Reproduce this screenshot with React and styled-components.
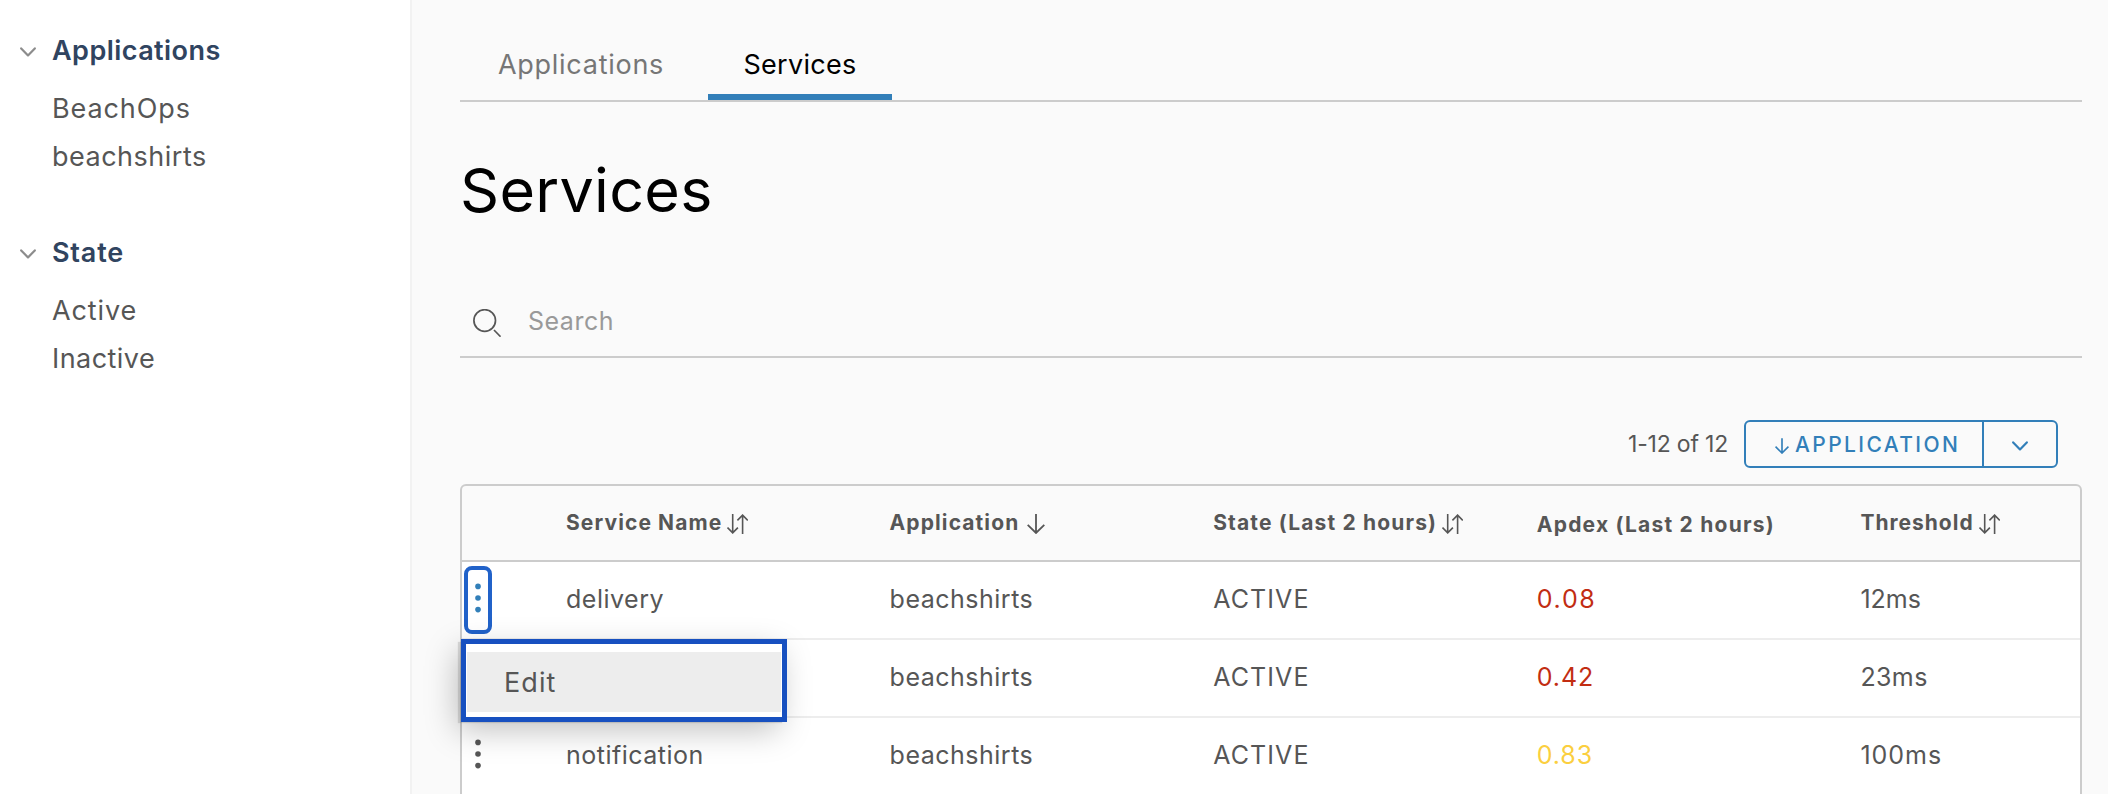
import React from "react";
import styled, { createGlobalStyle, css } from "styled-components";

const GlobalStyle = createGlobalStyle`
  *, *::before, *::after { box-sizing: border-box; }
  body {
    margin: 0;
    background: #fafafa;
    color: #565656;
    font-family: Inter, "Liberation Sans", sans-serif;
    font-size: 25px;
    overflow: hidden;
  }
  button { font: inherit; color: inherit; background: none; border: 0; padding: 0; margin: 0; }
`;

const Page = styled.div`
  display: flex;
  height: 794px;
  overflow: hidden;
`;

const Sidebar = styled.aside`
  flex: 0 0 412px;
  display: flex;
  flex-direction: column;
  gap: 47px;
  padding: 26px 20px 0;
  background: #fff;
  border-right: 2px solid #f2f2f2;
`;

const Heading = styled.h2`
  display: flex;
  align-items: center;
  gap: 16px;
  height: 48px;
  margin: 0 0 11px;
  font-size: 27px;
  font-weight: 600;
  color: #304460;
  letter-spacing: ${(p) => p.$spacing || 0}px;
  svg { margin-top: 4px; }
`;

const FilterList = styled.ul`
  list-style: none;
  margin: 0;
  padding: 0 0 0 32px;
`;

const FilterItem = styled.li`
  font-size: 27px;
  line-height: 48px;
  letter-spacing: ${(p) => p.$spacing || 0}px;
`;

const Main = styled.main`
  flex: 1;
  min-width: 0;
  padding: 0 26px 0 48px;
`;

const Tabs = styled.nav`
  display: flex;
  gap: 7px;
  height: 102px;
  padding: 28px 0 0 1px;
  border-bottom: 2px solid #ccc;
`;

const Tab = styled.button`
  width: ${(p) => p.$width}px;
  height: 72px;
  padding-top: 1px;
  font-size: 27px;
  line-height: 71px;
  letter-spacing: ${(p) => p.$spacing || 0}px;
  color: ${(p) => (p.$active ? "#000" : "#767676")};
  ${(p) => p.$active && css`box-shadow: inset 0 -6px 0 #327fb9;`}
`;

const Title = styled.h1`
  margin: 48px 0 56px;
  font-size: 61px;
  line-height: 80px;
  font-weight: 400;
  letter-spacing: 0.3px;
  color: #000;
`;

const SearchBar = styled.div`
  display: flex;
  align-items: center;
  gap: 27px;
  height: 72px;
  padding-left: 13px;
  border-bottom: 2px solid #ccc;
  color: #999;
  letter-spacing: 0.5px;
  svg { margin-top: 3px; }
`;

const Toolbar = styled.div`
  display: flex;
  justify-content: flex-end;
  align-items: center;
  gap: 16px;
  margin: 62px 24px 16px 0;
`;

const Count = styled.span`
  font-size: 23px;
  letter-spacing: -0.2px;
`;

const SplitButton = styled.div`
  display: flex;
  width: 314px;
  height: 48px;
  border: 2px solid #327fb9;
  border-radius: 6px;
  color: #327fb9;
`;

const SortButton = styled.button`
  display: flex;
  align-items: center;
  gap: 6px;
  width: 236px;
  padding-left: 29px;
  font-size: 21px;
  font-weight: 500;
  letter-spacing: 2.4px;
  svg { margin-top: 4px; }
`;

const SortToggle = styled.button`
  flex: 1;
  display: flex;
  align-items: center;
  justify-content: center;
  border-left: 2px solid #327fb9;
  svg { margin-top: 3px; }
`;

const Grid = styled.div`
  height: 340px;
  border: 2px solid #ccc;
  border-radius: 6px;
`;

const columns = css`
  display: grid;
  grid-template-columns: 104px repeat(4, 323.6px) 1fr;
  align-items: center;
`;

const HeaderRow = styled.div`
  ${columns}
  height: 76px;
  border-bottom: 2px solid #ccc;
`;

const HeaderCell = styled.div`
  display: flex;
  align-items: center;
  gap: ${(p) => p.$gap || 5}px;
  padding-top: ${(p) => (p.$low ? 3 : 0)}px;
  padding-bottom: ${(p) => (p.$low ? 0 : 1)}px;
  font-size: 21px;
  line-height: 28px;
  font-weight: 700;
  letter-spacing: ${(p) => p.$spacing || 0}px;
  white-space: nowrap;
  svg { margin-top: 3px; }
`;

const Row = styled.div`
  ${columns}
  position: relative;
  height: 78px;
  background: #fff;
  border-bottom: 2px solid #ededed;
`;

const Cell = styled.div`
  padding-bottom: 2px;
  color: ${(p) => p.$color || "#565656"};
  letter-spacing: ${(p) => p.$spacing ?? 0.5}px;
`;

const KebabButton = styled.button`
  display: flex;
  align-items: center;
  justify-content: center;
  width: 28px;
  height: 68px;
  margin-left: 2px;
  border: 4px solid ${(p) => (p.$open ? "#2162c9" : "transparent")};
  border-radius: 8px;
  color: ${(p) => (p.$open ? "#327fb9" : "#565656")};
  svg { display: block; margin-bottom: 4px; }
`;

const Menu = styled.div`
  position: absolute;
  z-index: 2;
  top: 77px;
  left: -1px;
  width: 326px;
  height: 83px;
  padding: 8px 1px 5px;
  background: #fff;
  border: 5px solid #1750c0;
  box-shadow: -4px 2px 1px -1px rgba(90, 90, 90, 0.2), -6px 10px 32px -2px rgba(0, 0, 0, 0.25);
`;

const MenuItem = styled.button`
  display: block;
  width: 100%;
  height: 60px;
  padding: 1px 0 0 37px;
  background: #ededed;
  font-size: 27px;
  line-height: 59px;
  letter-spacing: 1.1px;
  text-align: left;
`;

const Chevron = ({ color = "currentColor" }) => (
  <svg width="16" height="10" viewBox="0 0 16 10" fill="none" stroke={color} strokeWidth="2.2" strokeLinecap="round" strokeLinejoin="round">
    <path d="M1.2 1.4 8 8.4 14.8 1.4" />
  </svg>
);

const SearchIcon = () => (
  <svg width="28" height="28" viewBox="0 0 28 28" fill="none" stroke="#565656" strokeWidth="1.7">
    <circle cx="11.7" cy="11.5" r="10.8" />
    <path d="M21 21 27.6 27.7" />
  </svg>
);

const SortIcon = () => (
  <svg width="21" height="20" viewBox="0 0 21 20" fill="none" stroke="currentColor" strokeWidth="1.6">
    <path d="M5.7 0v19M.5 13.6l5.2 5.3 5.2-5.3M15.6 20V1M10.4 6.4l5.2-5.3 5.2 5.3" />
  </svg>
);

const DownIcon = ({ small }) => (
  <svg width={small ? 14 : 18} height={small ? 16 : 20} viewBox="0 0 18 20" fill="none" stroke="currentColor" strokeWidth={small ? 2.1 : 1.8}>
    <path d="M9 0v18.8M.7 10.8 9 19l8.300-8.200" />
  </svg>
);

const KebabIcon = () => (
  <svg width="6" height="30" viewBox="0 0 6 30" fill="currentColor">
    <circle cx="3" cy="3.400" r="2.800" />
    <circle cx="3" cy="15" r="2.800" />
    <circle cx="3" cy="26.600" r="2.800" />
  </svg>
);

const filters = [
  { title: "Applications", spacing: 0.45, items: [["BeachOps", 0.9], ["beachshirts", 0.5]] },
  { title: "State", spacing: 0.8, items: [["Active", 0.9], ["Inactive", 0.45]] },
];

const headers = [
  { label: "Service Name", icon: <SortIcon />, spacing: 1.1 },
  { label: "Application", icon: <DownIcon />, spacing: 1.1, gap: 8 },
  { label: "State (Last 2 hours)", icon: <SortIcon />, spacing: 1.15 },
  { label: "Apdex (Last 2 hours)", low: true, spacing: 1.22 },
  { label: "Threshold", icon: <SortIcon />, spacing: 1 },
];

const services = [
  { name: "delivery", apdex: "0.08", apdexSpacing: 1.7, color: "#c22d12", threshold: "12ms", thresholdSpacing: 0, open: true },
  { name: "", apdex: "0.42", apdexSpacing: 0.9, color: "#c22d12", threshold: "23ms", thresholdSpacing: 0.4 },
  { name: "notification", apdex: "0.83", apdexSpacing: 0.9, color: "#fbcf3f", threshold: "100ms", thresholdSpacing: 1 },
];

export default function App() {
  return (
    <>
      <GlobalStyle />
      <Page>
        <Sidebar>
          {filters.map((group) => (
            <section key={group.title}>
              <Heading $spacing={group.spacing}>
                <Chevron color="#8c8c8c" />
                {group.title}
              </Heading>
              <FilterList>
                {group.items.map(([label, spacing]) => (
                  <FilterItem key={label} $spacing={spacing}>{label}</FilterItem>
                ))}
              </FilterList>
            </section>
          ))}
        </Sidebar>
        <Main>
          <Tabs>
            <Tab $width={240} $spacing={0.73}>Applications</Tab>
            <Tab $width={184} $spacing={0.3} $active>Services</Tab>
          </Tabs>
          <Title>Services</Title>
          <SearchBar>
            <SearchIcon />
            <span>Search</span>
          </SearchBar>
          <Toolbar>
            <Count>1-12 of 12</Count>
            <SplitButton>
              <SortButton><DownIcon small />APPLICATION</SortButton>
              <SortToggle><Chevron /></SortToggle>
            </SplitButton>
          </Toolbar>
          <Grid>
            <HeaderRow>
              <span />
              {headers.map((h) => (
                <HeaderCell key={h.label} $low={h.low} $spacing={h.spacing} $gap={h.gap}>
                  {h.label}
                  {h.icon}
                </HeaderCell>
              ))}
            </HeaderRow>
            {services.map((s) => (
              <Row key={s.threshold}>
                <KebabButton $open={s.open}><KebabIcon /></KebabButton>
                <Cell>{s.name}</Cell>
                <Cell>beachshirts</Cell>
                <Cell $spacing={1.1}>ACTIVE</Cell>
                <Cell $color={s.color} $spacing={s.apdexSpacing}>{s.apdex}</Cell>
                <Cell $spacing={s.thresholdSpacing}>{s.threshold}</Cell>
                {s.open && <Menu><MenuItem>Edit</MenuItem></Menu>}
              </Row>
            ))}
          </Grid>
        </Main>
      </Page>
    </>
  );
}
